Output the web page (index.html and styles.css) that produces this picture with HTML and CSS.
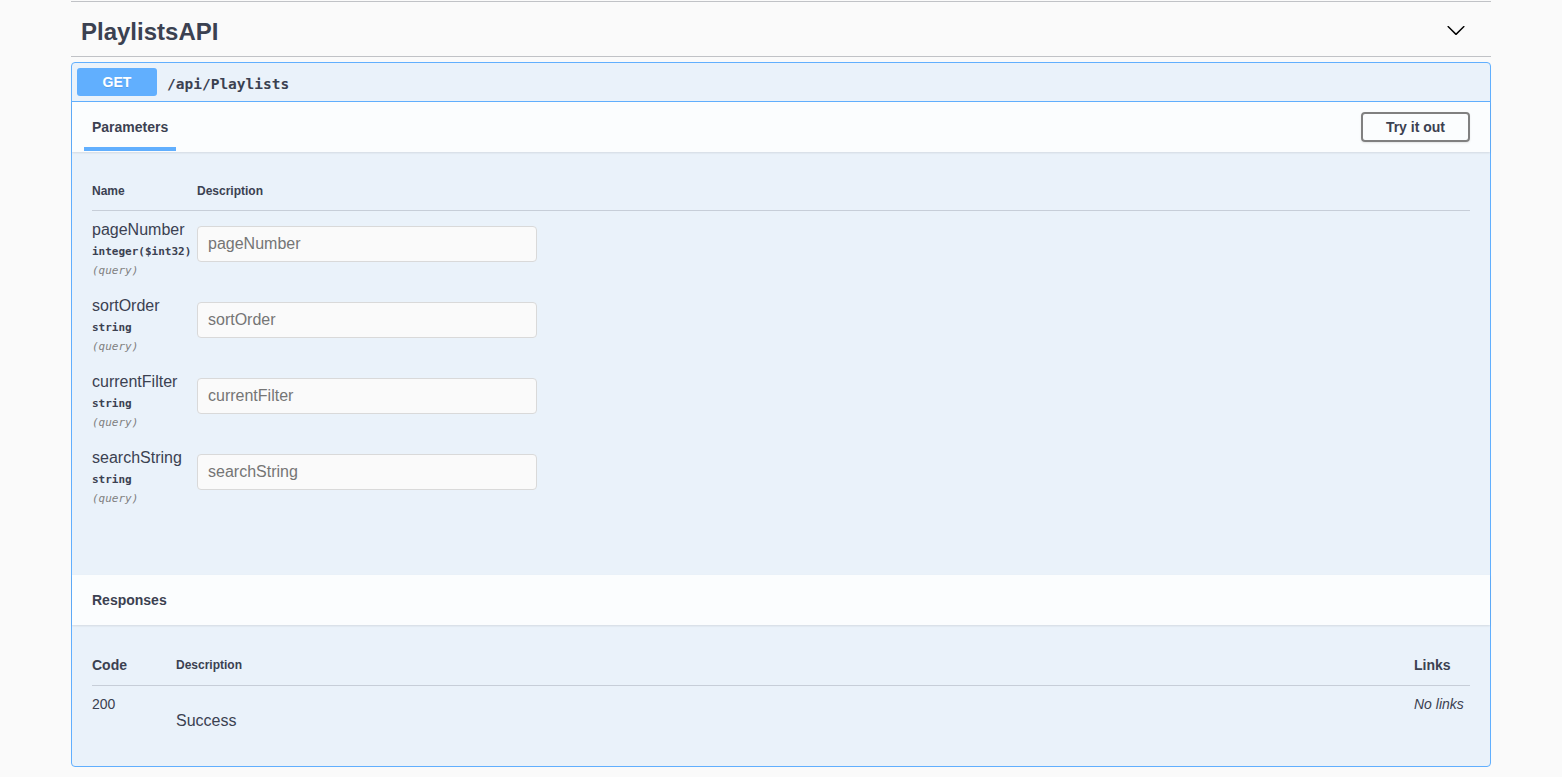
FILE: index.html
```html
<!DOCTYPE html>
<html lang="en">
<head>
<meta charset="utf-8">
<title>PlaylistsAPI</title>
<link rel="stylesheet" href="styles.css">
</head>
<body>
<div class="wrapper">
  <div class="tag">
    <h3 class="tag-title">PlaylistsAPI</h3>
    <svg class="chevron" viewBox="0 0 20 20" width="20" height="20"><path d="M17.418 6.109c.272-.268.709-.268.979 0s.271.701 0 .969l-7.908 7.83c-.27.268-.707.268-.979 0l-7.908-7.830c-.27-.268-.27-.701 0-.969.271-.268.709-.268.979 0L10 13.25l7.418-7.141z" fill="#000"/></svg>
  </div>
  <div class="opblock">
    <div class="summary">
      <span class="method">GET</span>
      <span class="path">/api/Playlists</span>
    </div>
    <div class="section-header tabs">
      <div class="section-title tab">Parameters</div>
      <button class="try">Try it out</button>
    </div>
    <div class="params">
      <div class="phead"><div>Name</div><div>Description</div></div>
      <div class="prow">
        <div class="pcell">
          <div class="pname">pageNumber</div>
          <div class="ptype">integer($int32)</div>
          <div class="pin">(query)</div>
        </div>
        <div><input class="pinput" type="text" placeholder="pageNumber"></div>
      </div>
      <div class="prow">
        <div class="pcell">
          <div class="pname">sortOrder</div>
          <div class="ptype">string</div>
          <div class="pin">(query)</div>
        </div>
        <div><input class="pinput" type="text" placeholder="sortOrder"></div>
      </div>
      <div class="prow">
        <div class="pcell">
          <div class="pname">currentFilter</div>
          <div class="ptype">string</div>
          <div class="pin">(query)</div>
        </div>
        <div><input class="pinput" type="text" placeholder="currentFilter"></div>
      </div>
      <div class="prow">
        <div class="pcell">
          <div class="pname">searchString</div>
          <div class="ptype">string</div>
          <div class="pin">(query)</div>
        </div>
        <div><input class="pinput" type="text" placeholder="searchString"></div>
      </div>
    </div>
    <div class="section-header plain">
      <div class="section-title">Responses</div>
    </div>
    <div class="responses">
      <div class="rhead">
        <div>Code</div>
        <div class="rhead-desc">Description</div>
        <div>Links</div>
      </div>
      <div class="rrow">
        <div>200</div>
        <div class="rdesc"><p>Success</p></div>
        <div class="nolinks">No links</div>
      </div>
    </div>
  </div>
</div>
</body>
</html>
```

FILE: styles.css
```css
* {
  box-sizing: border-box;
}

body {
  margin: 0;
  background: #fafafa;
  font-family: "Liberation Sans", Arial, sans-serif;
  color: #3b4151;
}

.wrapper {
  max-width: 1420px;
  margin: 0 auto;
  padding-top: 1px;
}

.tag {
  display: flex;
  justify-content: space-between;
  align-items: flex-start;
  height: 56px;
  padding: 15px 25px 9px 10px;
  border-top: 1px solid rgba(59, 65, 81, 0.3);
  border-bottom: 1px solid rgba(59, 65, 81, 0.3);
}

.tag-title {
  margin: 0;
  font-size: 24px;
  line-height: 30px;
  font-weight: bold;
}

.chevron {
  display: block;
  margin-top: 3px;
}

.opblock {
  margin-top: 5px;
  border: 1px solid #61affe;
  border-radius: 4px;
  background: rgba(97, 175, 254, 0.1);
}

.summary {
  display: flex;
  align-items: center;
  padding: 5px;
  border-bottom: 1px solid #61affe;
}

.method {
  min-width: 80px;
  padding: 6px 0;
  font-size: 14px;
  line-height: 16px;
  font-weight: bold;
  color: #fff;
  text-align: center;
  background: #61affe;
  border-radius: 3px;
  text-shadow: 0 1px 0 rgba(0, 0, 0, 0.1);
}

.path {
  padding: 3px 10px 0;
  font-family: "DejaVu Sans Mono", monospace;
  font-size: 14.5px;
  font-weight: bold;
}

.section-header {
  display: flex;
  justify-content: space-between;
  align-items: center;
  height: 50px;
  background: rgba(255, 255, 255, 0.8);
  box-shadow: 0 1px 2px rgba(0, 0, 0, 0.1);
}

.section-header.tabs {
  padding: 0 20px 0 12px;
}

.section-header.plain {
  padding: 0 20px;
}

.section-title {
  align-self: stretch;
  padding-top: 17px;
  font-size: 14px;
  line-height: 17px;
  font-weight: bold;
}

.tab {
  padding-left: 8px;
  padding-right: 8px;
  margin-bottom: 1px;
  border-bottom: 4px solid #61affe;
}

.try {
  padding: 5px 23px;
  font-family: "Liberation Sans", Arial, sans-serif;
  font-size: 14px;
  line-height: 16px;
  font-weight: bold;
  color: #3b4151;
  background: transparent;
  border: 2px solid gray;
  border-radius: 4px;
  box-shadow: 0 1px 2px rgba(0, 0, 0, 0.1);
}

.params {
  padding: 20px 20px 60px;
}

.phead {
  display: grid;
  grid-template-columns: 105px 1fr;
  padding: 12px 0;
  border-bottom: 1px solid rgba(59, 65, 81, 0.2);
  font-size: 12px;
  line-height: 14px;
  font-weight: bold;
}

.prow {
  display: grid;
  grid-template-columns: 105px 1fr;
  padding: 11px 0 10px;
}

.pname {
  font-size: 16px;
  line-height: 16px;
}

.ptype {
  padding: 6px 0 5px;
  font-family: "DejaVu Sans Mono", monospace;
  font-size: 11px;
  line-height: 16px;
  font-weight: bold;
}

.pin {
  font-family: "DejaVu Sans Mono", monospace;
  font-size: 11px;
  line-height: 12px;
  font-style: italic;
  color: gray;
}

.pinput {
  display: block;
  width: 340px;
  height: 36px;
  margin: 4px 0 0;
  padding: 8px 10px;
  font-family: "Liberation Sans", Arial, sans-serif;
  font-size: 16px;
  color: #3b4151;
  background: #fafafa;
  border: 1px solid #d9d9d9;
  border-radius: 4px;
}

.pinput::placeholder {
  color: #757575;
}

.responses {
  padding: 20px;
}

.rhead {
  display: grid;
  grid-template-columns: 84px 1fr 56px;
  padding: 12px 0;
  border-bottom: 1px solid rgba(59, 65, 81, 0.2);
  font-size: 14px;
  line-height: 16px;
  font-weight: bold;
}

.rhead-desc {
  font-size: 12px;
}

.rrow {
  display: grid;
  grid-template-columns: 84px 1fr 56px;
  padding: 10px 0;
  font-size: 14px;
  line-height: 16px;
}

.rdesc p {
  margin: 16px 0 6px;
  font-size: 16px;
  line-height: 18px;
}

.nolinks {
  font-style: italic;
}
```
